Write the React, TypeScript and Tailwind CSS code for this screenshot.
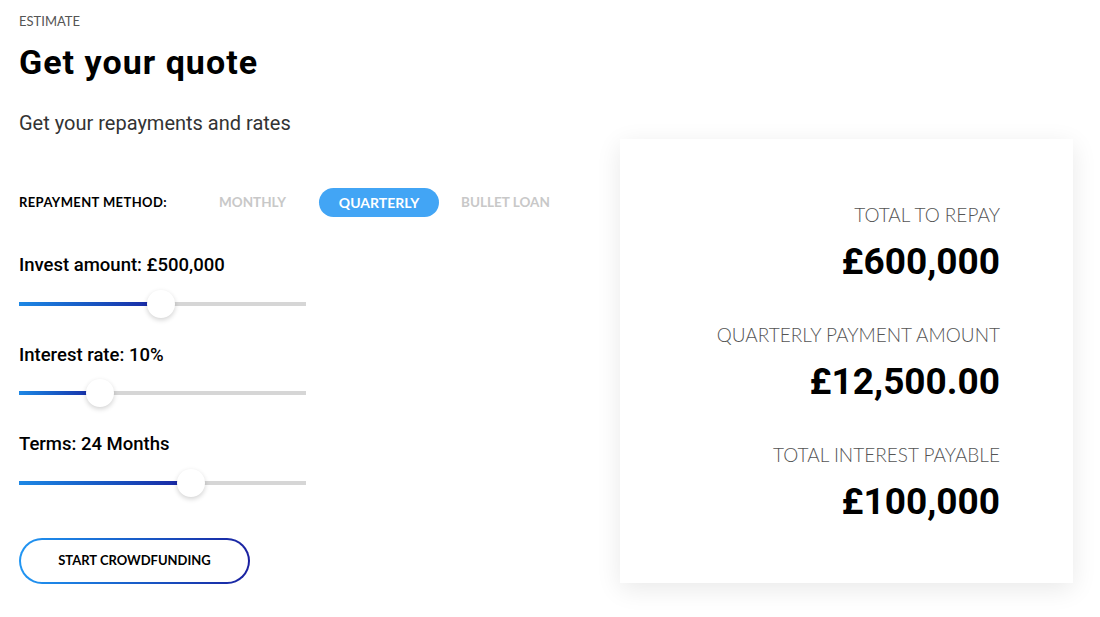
import React from 'react';

const roboto = { fontFamily: 'Roboto, "Liberation Sans", sans-serif' };
const lato = { fontFamily: 'Lato, "Liberation Sans", sans-serif' };

function Slider({ label, fill }: { label: string; fill: number }) {
  return (
    <div>
      <p className="text-[18.5px] font-medium leading-none text-black" style={roboto}>
        {label}
      </p>
      <div className="relative mt-[27px] h-[4px] w-[287px] bg-[#d6d6d6]">
        <div
          className="h-full bg-gradient-to-r from-[#1e88e5] to-[#1a1fa0]"
          style={{ width: fill }}
        />
        <div
          className="absolute top-1/2 h-[28px] w-[28px] -translate-x-1/2 -translate-y-1/2 rounded-full bg-white shadow-[0_2px_5px_rgba(0,0,0,0.18)]"
          style={{ left: fill }}
        />
      </div>
    </div>
  );
}

function Stat({ label, value }: { label: string; value: string }) {
  return (
    <div className="flex flex-col items-end">
      <p className="text-[19px] font-light leading-none text-[#555]" style={lato}>
        {label}
      </p>
      <p className="mt-[19px] text-[37px] font-bold leading-none text-black" style={roboto}>
        {value}
      </p>
    </div>
  );
}

export default function App() {
  return (
    <div className="flex h-[617px] w-[1100px] bg-white">
      <div className="w-[600px] pl-[19px] pt-[15px]">
        <p className="text-[13px] leading-none text-[#555]" style={lato}>
          ESTIMATE
        </p>
        <h1
          className="mt-[17px] text-[34px] font-bold leading-none tracking-[0.03em] text-black"
          style={roboto}
        >
          Get your quote
        </h1>
        <p className="mt-[34px] text-[20px] leading-none text-[#333]" style={roboto}>
          Get your repayments and rates
        </p>

        <div className="mt-[55px] flex items-center" style={lato}>
          <span className="text-[13px] font-bold tracking-[0.03em] text-black">
            REPAYMENT METHOD:
          </span>
          <div className="ml-[34px] flex items-center text-[13.5px] font-bold">
            <span className="pl-[18px] pr-[33px] text-[#c8c8c8]">MONTHLY</span>
            <span className="flex h-[29px] w-[120px] items-center justify-center rounded-full bg-[#42a5f5] text-[14px] text-white">
              QUARTERLY
            </span>
            <span className="ml-[22px] text-[#c8c8c8]">BULLET LOAN</span>
          </div>
        </div>

        <div className="mt-[39px] flex flex-col gap-[40px]">
          <Slider label="Invest amount: £500,000" fill={142} />
          <Slider label="Interest rate: 10%" fill={81} />
          <Slider label="Terms: 24 Months" fill={172} />
        </div>

        <div className="mt-[53px] w-[231px] rounded-full bg-gradient-to-r from-[#2196f3] to-[#1a1fa0] p-[2px]">
          <div
            className="flex h-[42px] items-center justify-center rounded-full bg-white text-[13px] font-bold text-black"
            style={lato}
          >
            START CROWDFUNDING
          </div>
        </div>
      </div>

      <div className="pt-[139px] pl-[20px]">
        <div className="flex h-[444px] w-[453px] flex-col gap-[45px] bg-white pr-[73px] pt-[66px] shadow-[0_6px_24px_rgba(0,0,0,0.09)]">
          <Stat label="TOTAL TO REPAY" value="£600,000" />
          <Stat label="QUARTERLY PAYMENT AMOUNT" value="£12,500.00" />
          <Stat label="TOTAL INTEREST PAYABLE" value="£100,000" />
        </div>
      </div>
    </div>
  );
}
